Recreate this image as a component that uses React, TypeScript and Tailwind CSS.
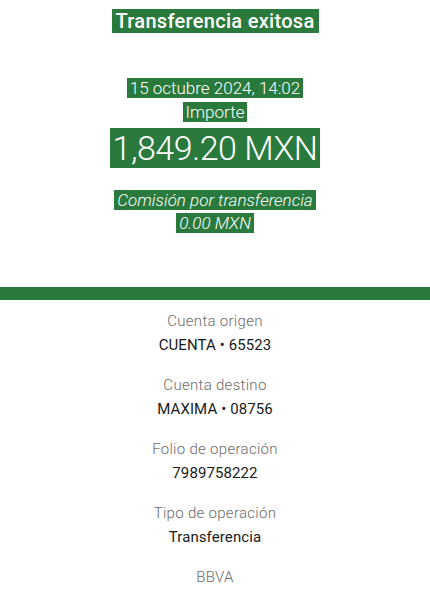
import React from 'react';

const details = [
  { label: 'Cuenta origen', value: 'CUENTA • 65523' },
  { label: 'Cuenta destino', value: 'MAXIMA • 08756' },
  { label: 'Folio de operación', value: '7989758222' },
  { label: 'Tipo de operación', value: 'Transferencia' },
];

// green text highlight used by the receipt header
function Mark({ children, className = '' }: { children: React.ReactNode; className?: string }) {
  return <span className={`bg-[#2a7a3e] text-white px-[3px] ${className}`}>{children}</span>;
}

export default function App() {
  return (
    <div className="w-[430px] h-[597px] bg-white overflow-hidden font-['Roboto',sans-serif] text-center">
      {/* Header */}
      <div className="pt-[10px] flex flex-col items-center">
        <div className="text-[20px] leading-[23px] font-medium tracking-[0.3px]">
          <Mark className="px-[4px]">Transferencia exitosa</Mark>
        </div>
        <div className="mt-[45px] text-[17px] leading-[20px] font-light">
          <Mark>15 octubre 2024, 14:02</Mark>
        </div>
        <div className="mt-[4px] text-[17px] leading-[20px] font-light">
          <Mark>Importe</Mark>
        </div>
        <div className="mt-[5px] text-[34px] leading-[42px] font-light tracking-[-0.5px]">
          <Mark className="px-0">1,849.20 MXN</Mark>
        </div>
        <div className="mt-[20px] text-[17px] leading-[22px] font-light italic">
          <Mark>Comisión por transferencia</Mark>
        </div>
        <div className="text-[17px] leading-[24px] font-light italic">
          <Mark>0.00 MXN</Mark>
        </div>
      </div>

      {/* Divider */}
      <div className="mt-[52px] h-[13px] bg-[#2a7a3e]" />

      {/* Details */}
      <div className="pt-[11px] flex flex-col gap-[20px]">
        {details.map((d) => (
          <div key={d.label} className="flex flex-col items-center">
            <span className="text-[15px] leading-[20px] font-light tracking-[0.3px] text-[#6b6b6b]">{d.label}</span>
            <span className="mt-[4px] text-[15px] leading-[20px] tracking-[0.1px] text-[#1a1a1a]">{d.value}</span>
          </div>
        ))}
        <span className="text-[15px] leading-[20px] font-light tracking-[0.3px] text-[#6b6b6b]">BBVA</span>
      </div>
    </div>
  );
}
